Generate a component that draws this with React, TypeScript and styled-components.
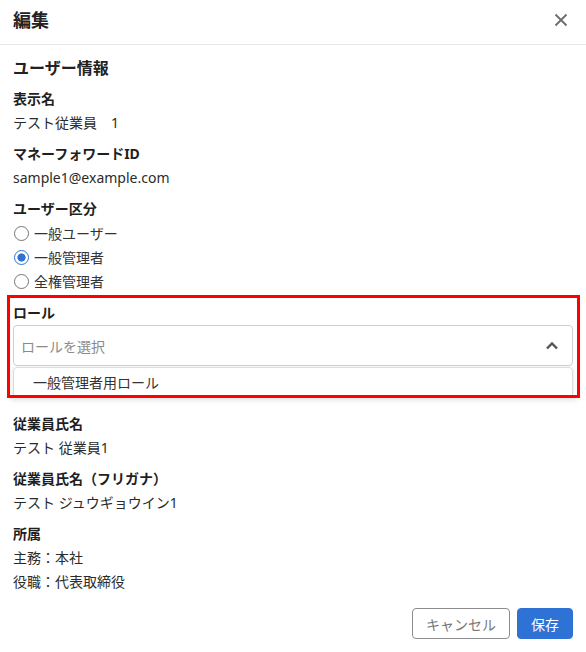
import * as React from 'react';
import styled, { createGlobalStyle } from 'styled-components';

const GlobalStyle = createGlobalStyle`
  html, body {
    margin: 0;
    padding: 0;
    background: #fff;
  }
  body {
    font-family: "Noto Sans", "Noto Sans CJK JP", sans-serif;
    color: #222;
  }
`;

interface IField {
  label: string;
  values: string[];
}

const topFields: IField[] = [
  { label: '表示名', values: ['テスト従業員　1'] },
  { label: 'マネーフォワードID', values: ['sample1@example.com'] },
];

const bottomFields: IField[] = [
  { label: '従業員氏名', values: ['テスト 従業員1'] },
  { label: '従業員氏名（フリガナ）', values: ['テスト ジュウギョウイン1'] },
  { label: '所属', values: ['主務：本社', '役職：代表取締役'] },
];

const userTypes = ['一般ユーザー', '一般管理者', '全権管理者'];

export default function App() {
  const [userType, setUserType] = React.useState(1);

  return (
    <Dialog>
      <GlobalStyle />
      <Header>
        <Title>編集</Title>
        <CloseButton aria-label="閉じる">
          <svg width="14" height="14" viewBox="0 0 14 14">
            <path d="M1.5 1.5 L12.5 12.5 M12.5 1.5 L1.5 12.5" stroke="#6e6e6e" strokeWidth="1.9" fill="none" />
          </svg>
        </CloseButton>
      </Header>
      <Body>
        <SectionTitle>ユーザー情報</SectionTitle>
        {topFields.map((f) => (
          <Field key={f.label}>
            <Label>{f.label}</Label>
            {f.values.map((v) => <Value key={v}>{v}</Value>)}
          </Field>
        ))}
        <Field>
          <Label>ユーザー区分</Label>
          {userTypes.map((t, i) => (
            <RadioRow key={t} onClick={() => setUserType(i)}>
              <RadioDot checked={i === userType} />
              <span>{t}</span>
            </RadioRow>
          ))}
        </Field>
        <Highlight>
          <Label>ロール</Label>
          <SelectBox>
            <Placeholder>ロールを選択</Placeholder>
            <svg width="14" height="9" viewBox="0 0 14 9">
              <path d="M2 7.5 L7 2.5 L12 7.5" stroke="#555" strokeWidth="2.4" fill="none" />
            </svg>
          </SelectBox>
          <Menu>
            <MenuItem>一般管理者用ロール</MenuItem>
          </Menu>
        </Highlight>
        <AfterHighlight>
          {bottomFields.map((f) => (
            <Field key={f.label}>
              <Label>{f.label}</Label>
              {f.values.map((v) => <Value key={v}>{v}</Value>)}
            </Field>
          ))}
        </AfterHighlight>
        <Footer>
          <Button variant="secondary">キャンセル</Button>
          <Button variant="primary">保存</Button>
        </Footer>
      </Body>
    </Dialog>
  );
}

const Dialog = styled.div`
  width: 586px;
  height: 652px;
  background: #fff;
  overflow: hidden;
`;

const Header = styled.div`
  height: 44px;
  display: flex;
  align-items: center;
  justify-content: space-between;
  padding: 0 13px;
  border-bottom: 1px solid #e6e6e6;
  box-sizing: content-box;
`;

const Title = styled.h1`
  margin: 0;
  font-size: 18px;
  font-weight: 700;
  line-height: 24px;
  color: #222;
  margin-top: -4px;
`;

const CloseButton = styled.button`
  border: none;
  background: none;
  padding: 0;
  width: 20px;
  height: 20px;
  display: flex;
  align-items: center;
  justify-content: center;
  margin-top: -4px;
  margin-right: 2px;
  cursor: pointer;
`;

const Body = styled.div`
  padding: 11px 13px 0;
  display: flex;
  flex-direction: column;
`;

const SectionTitle = styled.h2`
  margin: 0 0 7px;
  font-size: 16px;
  font-weight: 700;
  line-height: 24px;
  color: #222;
`;

const Field = styled.div`
  display: flex;
  flex-direction: column;
  & + & {
    margin-top: 7px;
  }
`;

const Label = styled.div`
  font-size: 14px;
  font-weight: 700;
  line-height: 24px;
  color: #1f1f1f;
`;

const Value = styled.div`
  font-size: 14px;
  line-height: 24px;
  color: #2b2b2b;
`;

const RadioRow = styled.label`
  display: flex;
  align-items: center;
  gap: 5px;
  height: 24px;
  font-size: 14px;
  color: #333;
  cursor: pointer;
`;

const RadioDot = styled.span<{ checked: boolean }>`
  width: 15px;
  height: 15px;
  margin-left: 1px;
  border-radius: 50%;
  box-sizing: border-box;
  border: 1.3px solid ${(p) => (p.checked ? '#2f72d6' : '#767676')};
  background: ${(p) => (p.checked ? 'radial-gradient(circle, #2f72d6 0 3.8px, #fff 4.4px)' : '#fff')};
`;

const Highlight = styled.div`
  margin: 2px -7px 0 -6px;
  padding: 3px 4px 0 3px;
  height: 103px;
  box-sizing: border-box;
  border: 3px solid #ff0000;
  overflow: hidden;
  box-shadow: 0 5px 5px -3px rgba(0, 0, 0, 0.12);
`;

const SelectBox = styled.div`
  height: 41px;
  box-sizing: border-box;
  border: 1px solid #cfcfcf;
  border-radius: 4px;
  display: flex;
  align-items: center;
  justify-content: space-between;
  padding: 0 13px 0 7px;
`;

const Placeholder = styled.span`
  font-size: 14px;
  color: #8a8a8a;
`;

const Menu = styled.div`
  margin-top: 1px;
  border: 1px solid #dcdcdc;
  border-radius: 4px;
  box-shadow: 0 1px 4px rgba(0, 0, 0, 0.12);
  padding: 5px 0 6px;
`;

const MenuItem = styled.div`
  padding: 0 19px;
  font-size: 14px;
  line-height: 20px;
  color: #333;
`;

const AfterHighlight = styled.div`
  margin-top: 14px;
  display: flex;
  flex-direction: column;
`;

const Footer = styled.div`
  display: flex;
  justify-content: flex-end;
  gap: 7px;
  margin-top: 14px;
`;

const Button = styled.button<{ variant: 'primary' | 'secondary' }>`
  height: 31px;
  box-sizing: border-box;
  border-radius: 4px;
  font-family: "Noto Sans", "Noto Sans CJK JP", sans-serif;
  font-size: 14px;
  padding: 0 13px;
  cursor: pointer;
  border: 1px solid ${(p) => (p.variant === 'primary' ? '#2f72d6' : '#8c8c8c')};
  background: ${(p) => (p.variant === 'primary' ? '#2f72d6' : '#fff')};
  color: ${(p) => (p.variant === 'primary' ? '#fff' : '#777')};
  min-width: ${(p) => (p.variant === 'primary' ? '56px' : '98px')};
`;
